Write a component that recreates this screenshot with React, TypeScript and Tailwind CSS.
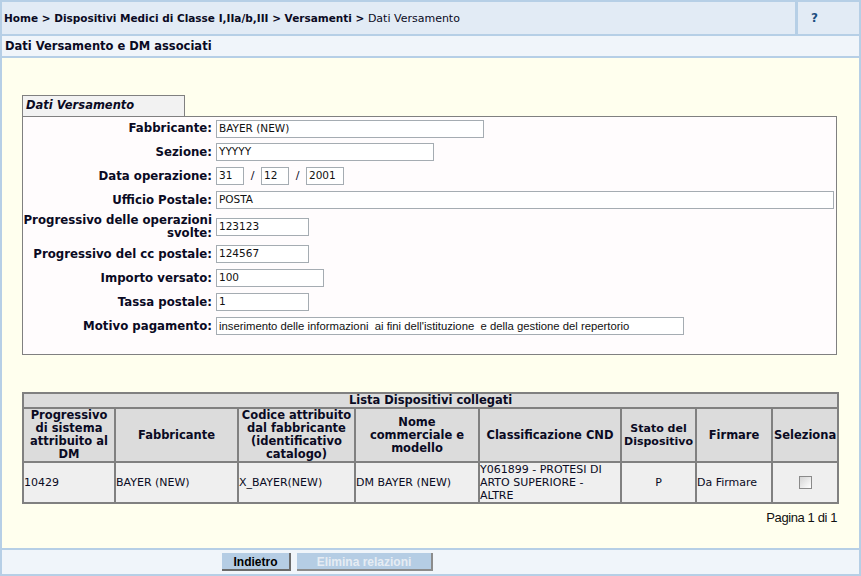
import React from 'react';

const rows: { label: React.ReactNode; width?: number; value?: string; h: string; kind?: 'date' | 'motivo' }[] = [
  { label: 'Fabbricante:', width: 268, value: 'BAYER (NEW)', h: 'h-[23px]' },
  { label: 'Sezione:', width: 218, value: 'YYYYY', h: 'h-6' },
  { label: 'Data operazione:', kind: 'date', h: 'h-6' },
  { label: 'Ufficio Postale:', width: 618, value: 'POSTA', h: 'h-6' },
  { label: <>Progressivo delle operazioni<br />svolte:</>, width: 93, value: '123123', h: 'h-[30px]' },
  { label: 'Progressivo del cc postale:', width: 93, value: '124567', h: 'h-6' },
  { label: 'Importo versato:', width: 108, value: '100', h: 'h-6' },
  { label: 'Tassa postale:', width: 93, value: '1', h: 'h-6' },
  { label: 'Motivo pagamento:', width: 468, kind: 'motivo', h: 'h-6' },
];

const Field = ({ w, v, small }: { w: number; v: string; small?: boolean }) => (
  <div
    className={`h-[18px] border border-[#a5acb2] bg-white px-[2px] flex items-center whitespace-pre overflow-hidden text-[#111] ${small ? "text-[11.3px] font-['Liberation_Sans',sans-serif]" : 'text-[10.5px]'}`}
    style={{ width: w }}
  >
    {v}
  </div>
);

const th = 'border border-[#808080] bg-[#dcdcdc] font-bold text-center leading-[13px] px-0 text-[11.5px]';
const td = 'border border-[#808080] bg-[#efefef] leading-[13px] px-0 text-[11px]';

export default function App() {
  return (
    <div className="w-[861px] h-[576px] border-2 border-[#b6cfe6] flex flex-col font-['DejaVu_Sans',sans-serif] text-[#0a0a23] overflow-hidden">
      {/* breadcrumb */}
      <div className="h-[34px] flex bg-[#e2ebf5] border-b-2 border-[#b6cfe6] shrink-0">
        <div className="flex-1 flex items-center pl-[2px] pt-[2px] whitespace-nowrap">
          <span className="font-bold text-[10.5px]">Home &gt; Dispositivi Medici di Classe I,IIa/b,III &gt; Versamenti &gt;</span>
          <span className="text-[11px]">&nbsp;Dati Versamento</span>
        </div>
        <div className="w-[3px] bg-[#b6cfe6]" />
        <div className="w-[61px] flex items-center justify-center text-[12px] font-bold text-[#1d4f80] pr-[28px]">?</div>
      </div>
      {/* title */}
      <div className="h-[22px] bg-[#f0f5fa] border-b-2 border-[#b6cfe6] flex items-center pl-[3px] pt-[1px] text-[11.5px] font-bold shrink-0">
        Dati Versamento e DM associati
      </div>
      {/* content */}
      <div className="flex-1 bg-[#ffffee] pl-[20px] pr-[20px] pt-[37px]">
        <div className="w-[163px] h-[21px] border border-b-0 border-[#808080] bg-[#f2f2f2] flex items-center pl-[3px] text-[11.5px] font-bold italic">
          Dati Versamento
        </div>
        <div className="w-[815px] h-[239px] border border-[#808080] bg-[#fffcfd]">
          {rows.map((r, i) => (
            <div key={i} className={`flex items-center ${r.h}`}>
              <div className="w-[193px] text-right font-bold text-[11.75px] leading-[13px] pr-[4px] whitespace-nowrap">{r.label}</div>
              {r.kind === 'date' ? (
                <div className="flex items-center text-[11px]">
                  <Field w={28} v="31" />
                  <span className="w-[17px] text-center">/</span>
                  <Field w={28} v="12" />
                  <span className="w-[17px] text-center">/</span>
                  <Field w={38} v="2001" />
                </div>
              ) : r.kind === 'motivo' ? (
                <Field w={468} small v="inserimento delle informazioni  ai fini dell'istituzione  e della gestione del repertorio" />
              ) : (
                <Field w={r.width!} v={r.value!} />
              )}
            </div>
          ))}
        </div>

        <table className="mt-[37px] w-[815px] table-fixed border border-[#808080] border-separate border-spacing-0">
          <colgroup>
            <col className="w-[92px]" />
            <col className="w-[123px]" />
            <col className="w-[117px]" />
            <col className="w-[124px]" />
            <col className="w-[142px]" />
            <col className="w-[75px]" />
            <col className="w-[76px]" />
            <col className="w-[66px]" />
          </colgroup>
          <thead>
            <tr>
              <th colSpan={8} className={`${th} h-[11px] leading-[11px]`}>Lista Dispositivi collegati</th>
            </tr>
            <tr className="h-[52px]">
              <th className={th}>Progressivo di sistema attribuito al DM</th>
              <th className={th}>Fabbricante</th>
              <th className={th}>Codice attribuito dal fabbricante (identificativo catalogo)</th>
              <th className={th}>Nome commerciale e modello</th>
              <th className={th}>Classificazione CND</th>
              <th className={`${th} text-[11px]`}>Stato del Dispositivo</th>
              <th className={th}>Firmare</th>
              <th className={th}>Seleziona</th>
            </tr>
          </thead>
          <tbody>
            <tr className="h-[39px]">
              <td className={`${td} text-left`}>10429</td>
              <td className={`${td} text-left`}>BAYER (NEW)</td>
              <td className={`${td} text-left`}>X_BAYER(NEW)</td>
              <td className={`${td} text-left`}>DM BAYER (NEW)</td>
              <td className={`${td} text-left`}>Y061899 - PROTESI DI ARTO SUPERIORE - ALTRE</td>
              <td className={`${td} text-center`}>P</td>
              <td className={`${td} text-left`}>Da Firmare</td>
              <td className={`${td} text-center`}>
                <span className="inline-block w-[13px] h-[13px] border border-[#8a8a8a] bg-gradient-to-br from-[#d4d4d4] to-[#ffffff] align-middle" />
              </td>
            </tr>
          </tbody>
        </table>
        <div className="w-[815px] text-right mt-[4px] text-[13px] tracking-[-0.4px] font-['Liberation_Sans_Narrow','Liberation_Sans',sans-serif] text-[#111]">
          Pagina 1 di 1
        </div>
      </div>
      {/* footer */}
      <div className="h-[26px] bg-[#f0f5fa] border-t-2 border-[#b6cfe6] flex items-center pl-[220px] gap-[6px] shrink-0 font-['Liberation_Sans_Narrow','Liberation_Sans',sans-serif] text-[12px] font-bold">
        <button className="w-[69px] h-[18px] bg-[#b5cde4] border-r-2 border-b-2 border-[#6b6b6b] text-[#000]">Indietro</button>
        <button className="w-[136px] h-[18px] bg-[#b5cde4] border-r-2 border-b-2 border-[#8c8c8c] text-[#e6ecf3]">Elimina relazioni</button>
      </div>
    </div>
  );
}
